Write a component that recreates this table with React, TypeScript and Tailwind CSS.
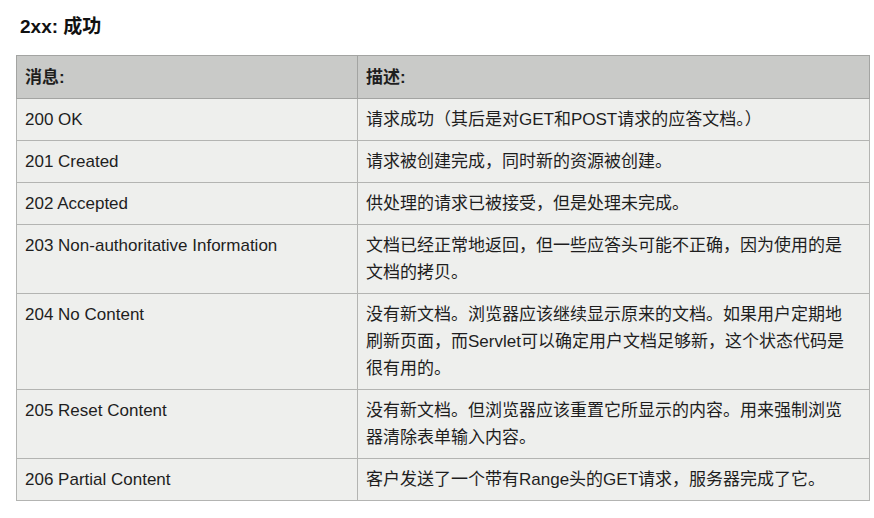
import React from "react";

const rows: { code: string; desc: React.ReactNode }[] = [
  { code: "200 OK", desc: "请求成功（其后是对GET和POST请求的应答文档。）" },
  { code: "201 Created", desc: "请求被创建完成，同时新的资源被创建。" },
  { code: "202 Accepted", desc: "供处理的请求已被接受，但是处理未完成。" },
  {
    code: "203 Non-authoritative Information",
    desc: (
      <>
        文档已经正常地返回，但一些应答头可能不正确，因为使用的是
        <br />
        文档的拷贝。
      </>
    ),
  },
  {
    code: "204 No Content",
    desc: (
      <>
        没有新文档。浏览器应该继续显示原来的文档。如果用户定期地
        <br />
        刷新页面，而Servlet可以确定用户文档足够新，这个状态代码是
        <br />
        很有用的。
      </>
    ),
  },
  {
    code: "205 Reset Content",
    desc: (
      <>
        没有新文档。但浏览器应该重置它所显示的内容。用来强制浏览
        <br />
        器清除表单输入内容。
      </>
    ),
  },
  { code: "206 Partial Content", desc: "客户发送了一个带有Range头的GET请求，服务器完成了它。" },
];

export default function App() {
  return (
    <div
      className="w-[874px] h-[518px] bg-white text-[#1e1e1e] overflow-hidden"
      style={{ fontFamily: '"Liberation Sans", "Noto Sans CJK SC", sans-serif' }}
    >
      <h2 className="pl-[20px] pt-[14px] h-[55px] text-[19px] leading-[25px] font-bold text-[#111]">
        2xx: 成功
      </h2>
      <table className="ml-[16px] w-[854px] border-collapse border border-[#9c9d9b] text-[17px] leading-[27px]">
        <thead>
          <tr className="bg-[#c9cac8]">
            <th className="w-[341px] border border-[#a3a4a2] px-[8px] pt-[8px] pb-[7px] text-left align-top font-bold">
              消息:
            </th>
            <th className="border border-[#a3a4a2] px-[8px] pt-[8px] pb-[7px] text-left align-top font-bold">
              描述:
            </th>
          </tr>
        </thead>
        <tbody>
          {rows.map((r) => (
            <tr key={r.code} className="bg-[#eeefed]">
              <td className="border border-[#b3b4b2] px-[8px] py-[7px] align-top">{r.code}</td>
              <td className="border border-[#b3b4b2] px-[8px] py-[7px] align-top">{r.desc}</td>
            </tr>
          ))}
        </tbody>
      </table>
    </div>
  );
}
